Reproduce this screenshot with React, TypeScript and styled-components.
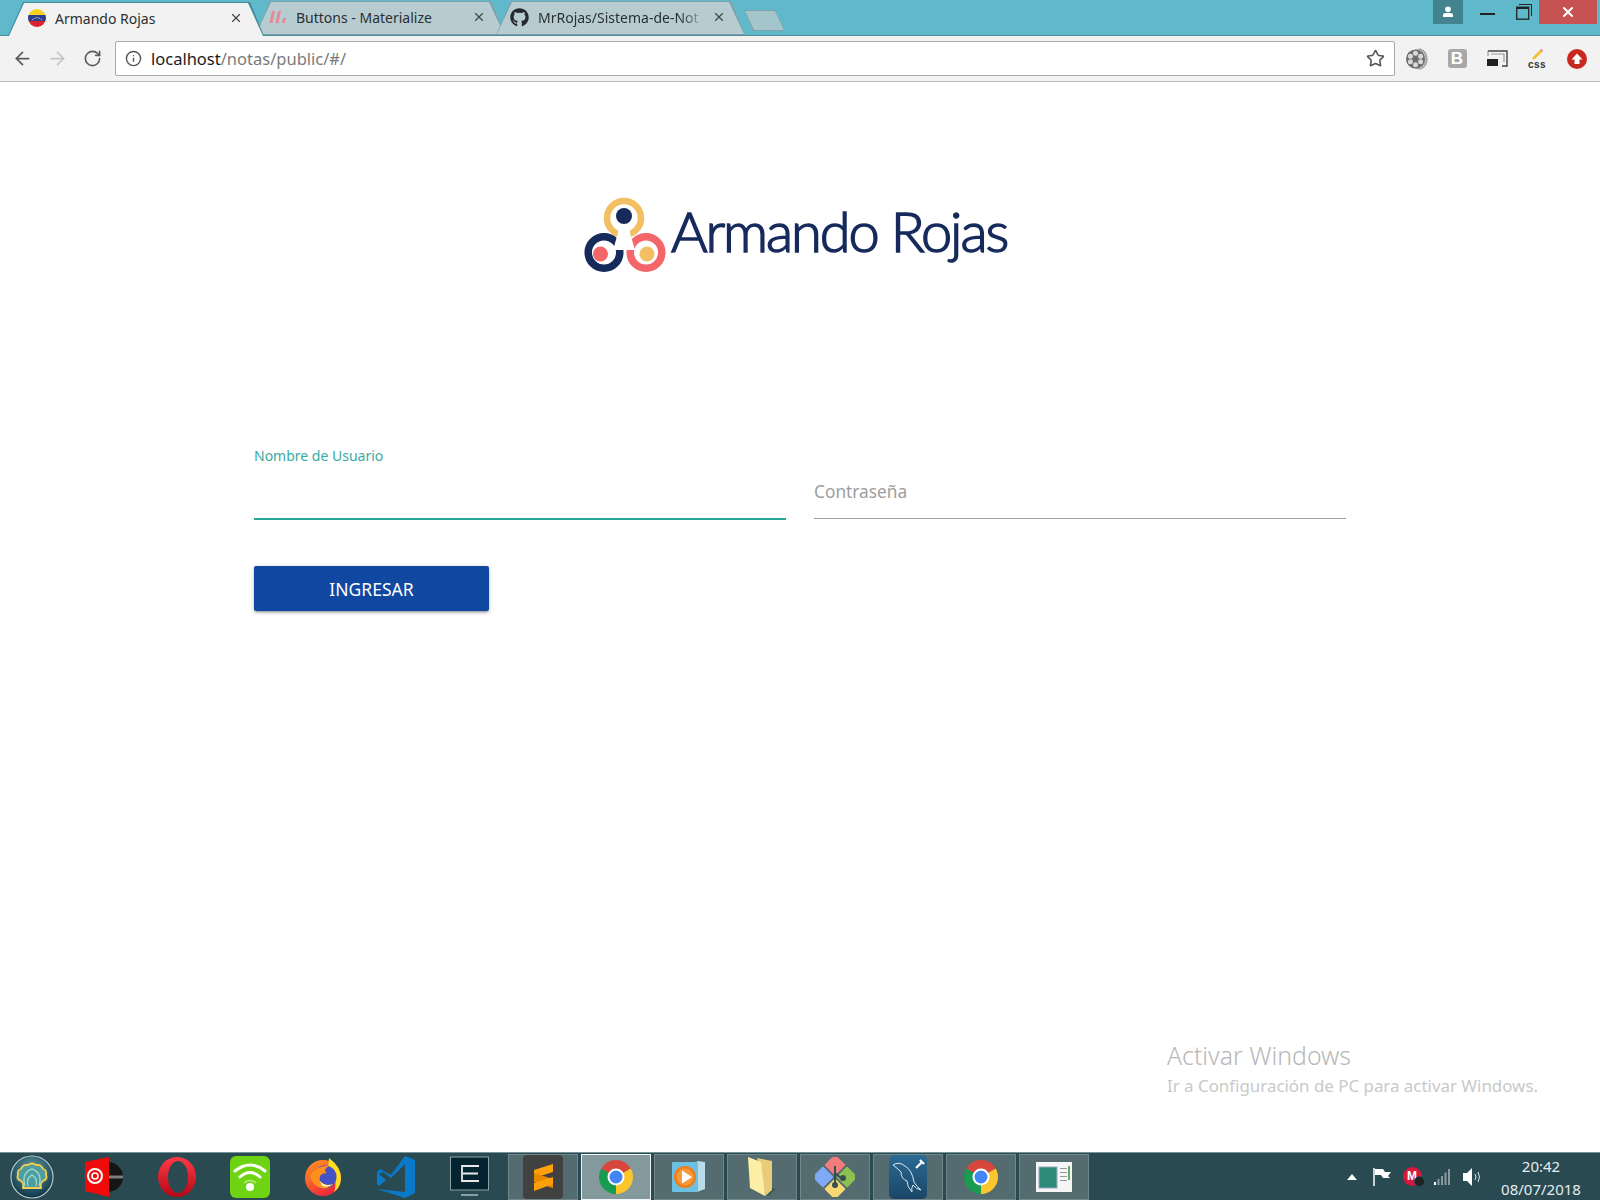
import React from "react";
import styled, { createGlobalStyle } from "styled-components";
import { ArrowLeft, ArrowRight, RotateCw, Info, Star, X } from "lucide-react";
import { FaGithub } from "react-icons/fa";

const GlobalStyle = createGlobalStyle`
  html, body {
    margin: 0;
    padding: 0;
    background: #fff;
    font-family: "Noto Sans", "Open Sans", sans-serif;
  }
`;

const Screen = styled.div`
  position: relative;
  width: 1600px;
  height: 1200px;
  display: flex;
  flex-direction: column;
  overflow: hidden;
`;

/* tab strip */
const TabStrip = styled.div`
  height: 36px;
  box-sizing: border-box;
  flex: none;
  display: flex;
  align-items: flex-end;
  padding-left: 8px;
  background: #5fb9ca;
  border-bottom: 1px solid #4b8d9b;
`;

const Tab = styled.div<{ $active?: boolean; $width: number }>`
  position: relative;
  width: ${(p) => p.$width}px;
  height: 34px;
  flex: none;
  box-sizing: border-box;
  display: flex;
  align-items: center;
  margin-left: ${(p) => (p.$active ? 0 : -9)}px;
  margin-bottom: ${(p) => (p.$active ? -1 : 0)}px;
  padding: 0 ${(p) => (p.$active ? 21 : 19)}px 2px ${(p) => (p.$active ? 20 : 14)}px;
  z-index: ${(p) => (p.$active ? 3 : 1)};
  background: ${(p) => (p.$active ? "#3f8b9b" : "#7fa0a8")};
  clip-path: polygon(0 100%, 15px 0, calc(100% - 14px) 0, 100% 100%);

  &::before {
    content: "";
    position: absolute;
    inset: 1px 1px ${(p) => (p.$active ? 0 : 1)}px 1px;
    background: ${(p) => (p.$active ? "#f2f2f2" : "#b7ccd1")};
    clip-path: polygon(0 100%, 15px 0, calc(100% - 15px) 0, 100% 100%);
  }

  & > * {
    position: relative;
  }
`;

const TabTitle = styled.span<{ $fade?: boolean }>`
  flex: 1;
  min-width: 0;
  margin-left: 9px;
  font-size: 14px;
  color: #2b2f30;
  white-space: nowrap;
  ${(p) =>
    p.$fade &&
    "mask-image: linear-gradient(to right, #000 82%, transparent 96%);"}
`;

const TabClose = styled(X)`
  flex: none;
  color: #444;
`;

const NewTabButton = styled.div`
  width: 41px;
  height: 21px;
  flex: none;
  align-self: flex-start;
  margin: 10px 0 0 -1px;
  background: #7fa0a8;
  clip-path: polygon(0 0, 31px 0, 100% 100%, 9px 100%);
  position: relative;

  &::before {
    content: "";
    position: absolute;
    inset: 1px;
    background: #a5c5cc;
    clip-path: polygon(0 0, 30px 0, 100% 100%, 9px 100%);
  }
`;

const WindowControls = styled.div`
  display: flex;
  align-self: flex-start;
  margin-left: auto;
  padding-right: 3px;
  height: 24px;
`;

const WinButton = styled.div<{ $width: number; $bg?: string; $left?: number }>`
  width: ${(p) => p.$width}px;
  margin-left: ${(p) => p.$left ?? 0}px;
  height: 24px;
  display: flex;
  align-items: center;
  justify-content: center;
  background: ${(p) => p.$bg ?? "transparent"};
`;

/* toolbar */
const Toolbar = styled.div`
  height: 46px;
  box-sizing: border-box;
  flex: none;
  display: flex;
  align-items: center;
  padding: 0 3px 0 5px;
  background: #f2f2f2;
  border-bottom: 1px solid #bdbdbd;
`;

const NavButton = styled.div<{ $muted?: boolean }>`
  width: 35px;
  display: flex;
  justify-content: center;
  color: ${(p) => (p.$muted ? "#c6c6c6" : "#5a5a5a")};
`;

const Omnibox = styled.div`
  flex: 1;
  height: 35px;
  box-sizing: border-box;
  margin: 0 2px 0 5px;
  padding: 0 9px 0 9px;
  display: flex;
  align-items: center;
  background: #fff;
  border: 1px solid #a9a9a9;
  border-radius: 2px;
  color: #555;
`;

const Url = styled.span`
  flex: 1;
  margin-left: 9px;
  font-size: 16.5px;
  color: #7a7a7a;

  b {
    font-weight: 400;
    color: #1a1a1a;
  }
`;

const ExtensionSlot = styled.div`
  width: 40px;
  height: 24px;
  display: flex;
  align-items: center;
  justify-content: center;
`;

const BootstrapBadge = styled.div`
  width: 19px;
  height: 19px;
  border-radius: 3px;
  background: #a8a8a8;
  color: #fff;
  font: 700 17px/19px "Liberation Sans", sans-serif;
  text-align: center;
`;

const CssBadge = styled.div`
  display: flex;
  flex-direction: column;
  align-items: center;
  font: 700 10px/9px "Liberation Sans", sans-serif;
  letter-spacing: 0.5px;
  color: #333;
`;

/* page */
const Main = styled.main`
  flex: 1;
  display: flex;
  flex-direction: column;
  align-items: center;
  padding-top: 113px;
`;

const Logo = styled.svg`
  display: block;
  flex: none;
`;

const LogoText = styled.text`
  font-family: "Lato", "Noto Sans", sans-serif;
  font-size: 56px;
  font-weight: 300;
  letter-spacing: -2.1px;
  fill: #162a5c;
  stroke: #162a5c;
  stroke-width: 1.5px;
`;

const LoginForm = styled.form`
  width: 1092px;
  margin-top: 171px;
`;

const FieldRow = styled.div`
  display: grid;
  grid-template-columns: 532px 532px;
  column-gap: 28px;
`;

const Field = styled.div`
  position: relative;
  padding-top: 28px;
`;

const FieldLabel = styled.label<{ $active?: boolean }>`
  position: absolute;
  left: 0;
  top: ${(p) => (p.$active ? 0 : 34)}px;
  font-size: ${(p) => (p.$active ? 14 : 17.3)}px;
  line-height: ${(p) => (p.$active ? 19 : 24)}px;
  color: ${(p) => (p.$active ? "#3aa99f" : "#9e9e9e")};
`;

const FieldInput = styled.input<{ $active?: boolean }>`
  display: block;
  width: 100%;
  height: 45px;
  box-sizing: border-box;
  padding: 0;
  border: 0;
  outline: 0;
  background: transparent;
  border-bottom: 1px solid ${(p) => (p.$active ? "#26a69a" : "#9e9e9e")};
  box-shadow: ${(p) => (p.$active ? "0 1px 0 0 #26a69a" : "none")};
`;

const SubmitButton = styled.button`
  display: block;
  width: 235px;
  height: 45px;
  margin-top: 47px;
  border: 0;
  border-radius: 2px;
  background: #0f47a1;
  color: #fff;
  font-family: inherit;
  font-size: 17.5px;
  box-shadow: 0 2px 2px 0 rgba(0, 0, 0, 0.14), 0 3px 1px -2px rgba(0, 0, 0, 0.12),
    0 1px 5px 0 rgba(0, 0, 0, 0.2);
`;

const ActivationNote = styled.div`
  position: absolute;
  left: 1167px;
  top: 1039px;
  color: #c9c9c9;
`;

const ActivationTitle = styled.div`
  font-size: 24.8px;
  line-height: 33px;
  font-weight: 300;
  color: #b8b8b8;
`;

const ActivationText = styled.div`
  font-size: 16.9px;
  line-height: 27px;
`;

/* taskbar */
const Taskbar = styled.footer`
  height: 48px;
  box-sizing: border-box;
  flex: none;
  display: flex;
  align-items: center;
  background: #2a4a52;
  border-top: 1px solid #76939a;
`;

const StartSlot = styled.div`
  width: 67.5px;
  display: flex;
  justify-content: center;
  padding-right: 3px;
  box-sizing: border-box;
`;

const PinnedSlot = styled.div`
  width: 73px;
  display: flex;
  justify-content: center;
  align-items: center;
`;

const AppGroup = styled.div`
  display: flex;
  gap: 3px;
  margin-left: 2.5px;
`;

const AppButton = styled.div<{ $active?: boolean }>`
  width: 70px;
  height: 46px;
  box-sizing: border-box;
  display: flex;
  align-items: center;
  justify-content: center;
  background: ${(p) => (p.$active ? "#83999c" : "#546c70")};
  border: 1px solid ${(p) => (p.$active ? "#f2f5f5" : "#70878b")};
`;

const Tray = styled.div`
  margin-left: auto;
  display: flex;
  align-items: center;
`;

const TraySlot = styled.div`
  position: relative;
  width: 30px;
  display: flex;
  justify-content: center;
  align-items: center;
`;

const MegaBadge = styled.div`
  width: 19px;
  height: 19px;
  border-radius: 50%;
  background: #d9163c;
  color: #fff;
  font: 700 12px/19px "Liberation Sans", sans-serif;
  text-align: center;
`;

const MegaPause = styled.div`
  position: absolute;
  left: 17px;
  top: 9px;
  width: 9px;
  height: 9px;
  border-radius: 50%;
  background: #222;
  border: 1px solid #2a4a52;
`;

const Clock = styled.div`
  width: 108px;
  margin-right: 5px;
  padding-top: 2px;
  text-align: center;
  color: #e6ecee;
  font-size: 15px;
  line-height: 23px;
`;

/* drawings */
const VenezuelaIcon = () => (
  <svg width="18" height="18" viewBox="0 0 18 18" style={{ flex: "none" }}>
    <defs>
      <clipPath id="ve">
        <circle cx="9" cy="9" r="9" />
      </clipPath>
    </defs>
    <g clipPath="url(#ve)">
      <rect width="18" height="6" fill="#f7d11e" />
      <rect y="6" width="18" height="6" fill="#2b3f8f" />
      <rect y="12" width="18" height="6" fill="#d8232f" />
      <path d="M4 11Q9 6.5 14 11" stroke="#fff" strokeWidth="1" strokeDasharray="1 1" fill="none" />
    </g>
  </svg>
);

const MaterializeIcon = () => (
  <svg width="18" height="14" viewBox="0 0 18 14" style={{ flex: "none" }}>
    <path d="M3 1h3L3.5 13H.5zM9 1h3L9.5 13h-3z" fill="#e58a98" />
    <path d="M14 8h3l-1 5h-3z" fill="#e58a98" />
  </svg>
);

const FilmReelIcon = () => (
  <svg width="22" height="22" viewBox="0 0 22 22">
    <ellipse cx="13" cy="11" rx="8.5" ry="10.5" fill="#b5b5b5" />
    <path d="M14 1Q21 3 21 11Q21 19 14 21" fill="none" stroke="#8a8a8a" strokeDasharray="1.5 1" />
    <circle cx="9.5" cy="11" r="9.5" fill="#6d6d6d" />
    <circle cx="9.5" cy="5.2" r="2.5" fill="#d8d8d8" />
    <circle cx="9.5" cy="16.8" r="2.5" fill="#d8d8d8" />
    <circle cx="4.4" cy="8.2" r="2.5" fill="#d8d8d8" />
    <circle cx="14.6" cy="8.2" r="2.5" fill="#d8d8d8" />
    <circle cx="4.4" cy="13.8" r="2.5" fill="#d8d8d8" />
    <circle cx="14.6" cy="13.8" r="2.5" fill="#d8d8d8" />
  </svg>
);

const CastIcon = () => (
  <svg width="21" height="17" viewBox="0 0 21 17">
    <path d="M1 1h19v15h-5" fill="none" stroke="#444" strokeWidth="1.4" />
    <path d="M1 1v5M4 4h13v8" fill="none" stroke="#999" strokeWidth="1.2" />
    <rect x="0" y="9" width="11" height="7" fill="#222" />
  </svg>
);

const PencilIcon = () => (
  <svg width="14" height="12" viewBox="0 0 14 12">
    <path d="M3 9L10 2l2 2-7 7-3 .5z" fill="#f2c230" />
    <path d="M10 2l1.3-1.3 2 2L12 4z" fill="#e58a98" />
  </svg>
);

const UploadIcon = () => (
  <svg width="20" height="20" viewBox="0 0 20 20">
    <circle cx="10" cy="10" r="10" fill="#c9281f" />
    <path d="M10 4.5L15.5 10.5H12.5V15H7.5V10.5H4.5z" fill="#fff" />
  </svg>
);

const AvatarIcon = () => (
  <svg width="12" height="12" viewBox="0 0 12 12">
    <circle cx="6" cy="3.2" r="2.8" fill="#fff" />
    <path d="M1 11V9Q1 7.2 4 7H8Q11 7.2 11 9V11z" fill="#fff" />
  </svg>
);

const MinimizeIcon = () => (
  <svg width="15" height="6" viewBox="0 0 15 6">
    <rect y="4" width="15" height="2" fill="#222" />
  </svg>
);

const RestoreIcon = () => (
  <svg width="16" height="16" viewBox="0 0 16 16">
    <path d="M3 .5h12.5V12" fill="none" stroke="#222" />
    <rect x=".7" y="3.2" width="12" height="12" fill="none" stroke="#222" strokeWidth="1.3" />
    <rect x=".7" y="3" width="12" height="2" fill="#222" />
  </svg>
);

const LogoMark = () => (
  <g>
    <circle cx="41" cy="23" r="17" fill="none" stroke="#f2c063" strokeWidth="6.5" />
    <circle cx="21" cy="57.5" r="15.8" fill="none" stroke="#162a5c" strokeWidth="7.5" />
    <circle cx="63" cy="57.5" r="15.8" fill="none" stroke="#f5666a" strokeWidth="7.5" />
    <path d="M35 28H47V38L52 55H30L35 38z" fill="#fff" />
    <circle cx="41" cy="21" r="8" fill="#162a5c" />
    <circle cx="17.5" cy="59" r="7.5" fill="#f5666a" />
    <circle cx="64" cy="59" r="7.5" fill="#f2c063" />
  </g>
);

const ShellOrb = () => (
  <svg width="44" height="44" viewBox="0 0 44 44">
    <defs>
      <radialGradient id="orb" cx="50%" cy="35%" r="65%">
        <stop offset="0%" stopColor="#6aa6aa" />
        <stop offset="100%" stopColor="#0b3347" />
      </radialGradient>
    </defs>
    <circle cx="22" cy="22" r="21" fill="url(#orb)" stroke="#b6c9cc" strokeWidth="1.2" />
    <path
      d="M13 33Q14 28 11 26Q6 24 8 20Q7 15 11 14Q13 9 18 10Q22 7 26 10Q31 9 33 14Q37 15 36 20Q38 24 33 26Q30 28 31 33z"
      fill="#4e9c9e"
      stroke="#f4cc4e"
      strokeWidth="1.8"
    />
    <path d="M15 31Q11 18 22 14Q33 18 29 31" fill="none" stroke="#97d6cf" strokeWidth="1.4" />
    <path d="M18 31Q16 23 22 20Q28 23 26 31" fill="none" stroke="#97d6cf" strokeWidth="1.4" />
  </svg>
);

const DiscIcon = () => (
  <svg width="40" height="40" viewBox="0 0 40 40">
    <defs>
      <linearGradient id="vinyl" x1="0" y1="0" x2="0" y2="1">
        <stop offset="0.42" stopColor="#151515" />
        <stop offset="0.5" stopColor="#9a9a9a" />
        <stop offset="0.58" stopColor="#151515" />
      </linearGradient>
    </defs>
    <circle cx="24" cy="20" r="15" fill="url(#vinyl)" />
    <path d="M1 5L25 0V40L1 34z" fill="#f00a0a" />
    <circle cx="11" cy="19" r="7" fill="none" stroke="#fff" strokeWidth="2" />
    <circle cx="11" cy="19" r="3" fill="none" stroke="#fff" strokeWidth="1.6" />
  </svg>
);

const OperaIcon = () => (
  <svg width="38" height="40" viewBox="0 0 38 40">
    <defs>
      <linearGradient id="op" x1="0" y1="0" x2="0" y2="1">
        <stop offset="0%" stopColor="#ff3a46" />
        <stop offset="100%" stopColor="#b30715" />
      </linearGradient>
    </defs>
    <ellipse cx="19" cy="20" rx="19" ry="20" fill="url(#op)" />
    <ellipse cx="20" cy="20" rx="10" ry="16" fill="#2a4a52" />
  </svg>
);

const WifiIcon = () => (
  <svg width="40" height="42" viewBox="0 0 40 42">
    <rect width="40" height="42" rx="6" fill="#6ed312" />
    <g fill="none" stroke="#fff" strokeLinecap="round" strokeWidth="3">
      <path d="M5 15Q20 3 35 15" />
      <path d="M10 21Q20 12 30 21" />
    </g>
    <path d="M14 27Q20 22 26 27" fill="none" stroke="#a5e86a" strokeWidth="2" />
    <circle cx="20" cy="31" r="4" fill="#fff" />
  </svg>
);

const FirefoxIcon = () => (
  <svg width="36" height="38" viewBox="0 0 36 38">
    <defs>
      <linearGradient id="ff" x1="0" y1="0" x2="0.6" y2="1">
        <stop offset="0%" stopColor="#ff9a1f" />
        <stop offset="100%" stopColor="#f0263c" />
      </linearGradient>
    </defs>
    <circle cx="18" cy="20" r="18" fill="url(#ff)" />
    <path d="M24 0Q36 9 36 20Q36 29 29 34Q34 20 23 11z" fill="#ffdd1f" />
    <circle cx="20" cy="19" r="11.5" fill="#4452c6" />
    <path d="M5 17Q12 7 24 8Q17 12 22 15Q13 15 15 23Q20 29 28 26Q22 33 13 29Q6 25 5 17z" fill="#ff8f1f" />
    <path d="M15 23Q20 29 28 26Q23 30 17 28z" fill="#fff2a8" />
  </svg>
);

const VsCodeIcon = () => (
  <svg width="38" height="42" viewBox="0 0 38 42">
    <path d="M28 0L38 4V37L28 42L0 33L28 36V8L14 22L6 16L2 18L9 24L2 30L0 28V16L3 13L14 19z" fill="#0a79c9" />
  </svg>
);

const MonitorIcon = () => (
  <svg width="39" height="42" viewBox="0 0 39 42">
    <rect x=".5" y="1" width="38" height="33" fill="#04242f" stroke="#8aa0a5" />
    <path d="M29 10H12V25H29" fill="none" stroke="#e8e8e8" strokeWidth="1.8" />
    <path d="M13 17.5H28" stroke="#e8e8e8" strokeWidth="2" />
    <rect x="11" y="38" width="17" height="2" fill="#8aa0a5" />
  </svg>
);

const SublimeIcon = () => (
  <svg width="40" height="44" viewBox="0 0 40 44">
    <rect width="40" height="44" rx="4" fill="#414141" />
    <path d="M30 9V17L11 23V15z" fill="#ff9f0a" />
    <path d="M11 18L30 24V33L11 27z" fill="#e78a00" />
    <path d="M30 22V29L11 36V28z" fill="#ff9f0a" />
  </svg>
);

const ChromeIcon = () => (
  <svg width="36" height="36" viewBox="0 0 36 36">
    <path d="M18 18L3.3 9.5A17 17 0 0 1 32.7 9.5z" fill="#d9463b" />
    <path d="M18 18L32.7 9.5A17 17 0 0 1 18 35z" fill="#fbc62c" />
    <path d="M18 18L18 35A17 17 0 0 1 3.3 9.5z" fill="#1a9c50" />
    <circle cx="18" cy="18" r="8.5" fill="#fff" />
    <circle cx="18" cy="18" r="6.5" fill="#4285f4" />
  </svg>
);

const MediaPlayerIcon = () => (
  <svg width="34" height="36" viewBox="0 0 34 36">
    <path d="M25 2L33 3V30L25 33z" fill="#b9dcea" />
    <rect x="0" y="3" width="26" height="30" rx="1" fill="#6cc0e2" />
    <circle cx="13" cy="18" r="11" fill="#f07d1a" />
    <circle cx="13" cy="18" r="8.5" fill="#f79a3d" />
    <path d="M10 11.5L20 18L10 24.5z" fill="#fff" />
  </svg>
);

const FolderIcon = () => (
  <svg width="28" height="40" viewBox="0 0 28 40">
    <path d="M22 30L28 32L20 39z" fill="#3d5558" />
    <path d="M9 1L24 4V33L17 39z" fill="#e8cc7a" />
    <path d="M0 0L13 5L17 39L2 31z" fill="#fdeea6" />
  </svg>
);

const GitGuiIcon = () => (
  <svg width="40" height="40" viewBox="0 0 40 40">
    <g transform="rotate(45 20 20)">
      <rect x="4" y="4" width="15" height="15" rx="1" fill="#f27b7b" />
      <rect x="21" y="4" width="15" height="15" rx="1" fill="#8cc152" />
      <rect x="21" y="21" width="15" height="15" rx="1" fill="#f7d774" />
      <rect x="4" y="21" width="15" height="15" rx="1" fill="#7faaf5" />
    </g>
    <path d="M20 9V26M20 16L27 22" stroke="#35504f" strokeWidth="2" fill="none" />
    <circle cx="20" cy="28" r="3" fill="#35504f" />
    <circle cx="28" cy="21" r="3" fill="#35504f" />
  </svg>
);

const MySqlIcon = () => (
  <svg width="38" height="44" viewBox="0 0 38 44">
    <defs>
      <linearGradient id="mysql" x1="0" y1="0" x2="0" y2="1">
        <stop offset="0%" stopColor="#2b6b94" />
        <stop offset="100%" stopColor="#1a4566" />
      </linearGradient>
    </defs>
    <rect width="38" height="44" rx="5" fill="url(#mysql)" />
    <path
      d="M4 10Q10 6 16 11Q23 15 25 27Q27 31 32 35Q27 34 24 30Q22 33 23 37Q18 32 18 26Q12 24 12 17Q8 13 4 10z"
      fill="none"
      stroke="#dbe7ee"
      strokeWidth="1"
    />
    <path d="M27 13L33 7M31 5L35 9" stroke="#fff" strokeWidth="2.2" />
  </svg>
);

const WindowThumb = () => (
  <svg width="36" height="30" viewBox="0 0 36 30">
    <rect width="36" height="30" fill="#f5f5f5" />
    <rect x="3" y="5" width="18" height="21" fill="#2c8a78" stroke="#9ab" />
    <rect x="24" y="6" width="7" height="1" fill="#999" />
    <rect x="24" y="10" width="7" height="1" fill="#999" />
    <rect x="24" y="14" width="7" height="1" fill="#999" />
    <rect x="24" y="18" width="7" height="1" fill="#999" />
    <rect x="32" y="4" width="2" height="14" fill="#5fae5f" />
  </svg>
);

const FlagIcon = () => (
  <svg width="20" height="20" viewBox="0 0 20 20">
    <path d="M2 1V19" stroke="#fff" strokeWidth="1.5" />
    <path d="M3 2H11L13 5H19L16 9L18 11H11L9 8H3z" fill="#fff" />
  </svg>
);

const SignalIcon = () => (
  <svg width="16" height="16" viewBox="0 0 16 16">
    <rect x="0" y="13" width="2" height="3" fill="#fff" />
    <rect x="3.5" y="10" width="2" height="6" fill="#8a9a9d" />
    <rect x="7" y="7" width="2" height="9" fill="#8a9a9d" />
    <rect x="10.5" y="3.5" width="2" height="12.5" fill="#8a9a9d" />
    <rect x="14" y="0" width="2" height="16" fill="#8a9a9d" />
  </svg>
);

const SpeakerIcon = () => (
  <svg width="20" height="20" viewBox="0 0 20 20">
    <path d="M1 6H5L10 1V19L5 14H1z" fill="#fff" />
    <path d="M13 7Q15 10 13 13M16 5Q19 10 16 15" fill="none" stroke="#dfe6e8" />
  </svg>
);

const TrayArrow = () => (
  <svg width="10" height="6" viewBox="0 0 10 6">
    <path d="M5 0L10 6H0z" fill="#fff" />
  </svg>
);

const pinned = [DiscIcon, OperaIcon, WifiIcon, FirefoxIcon, VsCodeIcon, MonitorIcon];

export default function App() {
  return (
    <Screen>
      <GlobalStyle />
      <TabStrip>
        <Tab $active $width={256}>
          <VenezuelaIcon />
          <TabTitle>Armando Rojas</TabTitle>
          <TabClose size={14} />
        </Tab>
        <Tab $width={250}>
          <MaterializeIcon />
          <TabTitle>Buttons - Materialize</TabTitle>
          <TabClose size={14} />
        </Tab>
        <Tab $width={249}>
          <FaGithub size={19} color="#24292e" style={{ flex: "none" }} />
          <TabTitle $fade>MrRojas/Sistema-de-Not</TabTitle>
          <TabClose size={14} />
        </Tab>
        <NewTabButton />
        <WindowControls>
          <WinButton $width={30} $bg="#42838f">
            <AvatarIcon />
          </WinButton>
          <WinButton $width={44} $left={2}>
            <MinimizeIcon />
          </WinButton>
          <WinButton $width={30}>
            <RestoreIcon />
          </WinButton>
          <WinButton $width={58} $bg="#c75252">
            <X size={16} color="#fff" strokeWidth={3} />
          </WinButton>
        </WindowControls>
      </TabStrip>

      <Toolbar>
        <NavButton>
          <ArrowLeft size={21} />
        </NavButton>
        <NavButton $muted>
          <ArrowRight size={21} />
        </NavButton>
        <NavButton>
          <RotateCw size={19} />
        </NavButton>
        <Omnibox>
          <Info size={17} />
          <Url>
            <b>localhost</b>/notas/public/#/
          </Url>
          <Star size={19} />
        </Omnibox>
        <ExtensionSlot>
          <FilmReelIcon />
        </ExtensionSlot>
        <ExtensionSlot>
          <BootstrapBadge>B</BootstrapBadge>
        </ExtensionSlot>
        <ExtensionSlot>
          <CastIcon />
        </ExtensionSlot>
        <ExtensionSlot>
          <CssBadge>
            <PencilIcon />
            css
          </CssBadge>
        </ExtensionSlot>
        <ExtensionSlot>
          <UploadIcon />
        </ExtensionSlot>
      </Toolbar>

      <Main>
        <Logo width="434" height="80" viewBox="0 0 434 80">
          <LogoMark />
          <LogoText x="88" y="57">
            Armando Rojas
          </LogoText>
        </Logo>
        <LoginForm>
          <FieldRow>
            <Field>
              <FieldLabel $active htmlFor="usuario">
                Nombre de Usuario
              </FieldLabel>
              <FieldInput $active id="usuario" type="text" />
            </Field>
            <Field>
              <FieldLabel htmlFor="clave">Contraseña</FieldLabel>
              <FieldInput id="clave" type="password" />
            </Field>
          </FieldRow>
          <SubmitButton type="button">INGRESAR</SubmitButton>
        </LoginForm>
      </Main>

      <ActivationNote>
        <ActivationTitle>Activar Windows</ActivationTitle>
        <ActivationText>Ir a Configuración de PC para activar Windows.</ActivationText>
      </ActivationNote>

      <Taskbar>
        <StartSlot>
          <ShellOrb />
        </StartSlot>
        {pinned.map((Icon, i) => (
          <PinnedSlot key={i}>
            <Icon />
          </PinnedSlot>
        ))}
        <AppGroup>
          <AppButton>
            <SublimeIcon />
          </AppButton>
          <AppButton $active>
            <ChromeIcon />
          </AppButton>
          <AppButton>
            <MediaPlayerIcon />
          </AppButton>
          <AppButton>
            <FolderIcon />
          </AppButton>
          <AppButton>
            <GitGuiIcon />
          </AppButton>
          <AppButton>
            <MySqlIcon />
          </AppButton>
          <AppButton>
            <ChromeIcon />
          </AppButton>
          <AppButton>
            <WindowThumb />
          </AppButton>
        </AppGroup>
        <Tray>
          <TraySlot>
            <TrayArrow />
          </TraySlot>
          <TraySlot>
            <FlagIcon />
          </TraySlot>
          <TraySlot>
            <MegaBadge>M</MegaBadge>
            <MegaPause />
          </TraySlot>
          <TraySlot>
            <SignalIcon />
          </TraySlot>
          <TraySlot>
            <SpeakerIcon />
          </TraySlot>
          <Clock>
            20:42
            <br />
            08/07/2018
          </Clock>
        </Tray>
      </Taskbar>
    </Screen>
  );
}
